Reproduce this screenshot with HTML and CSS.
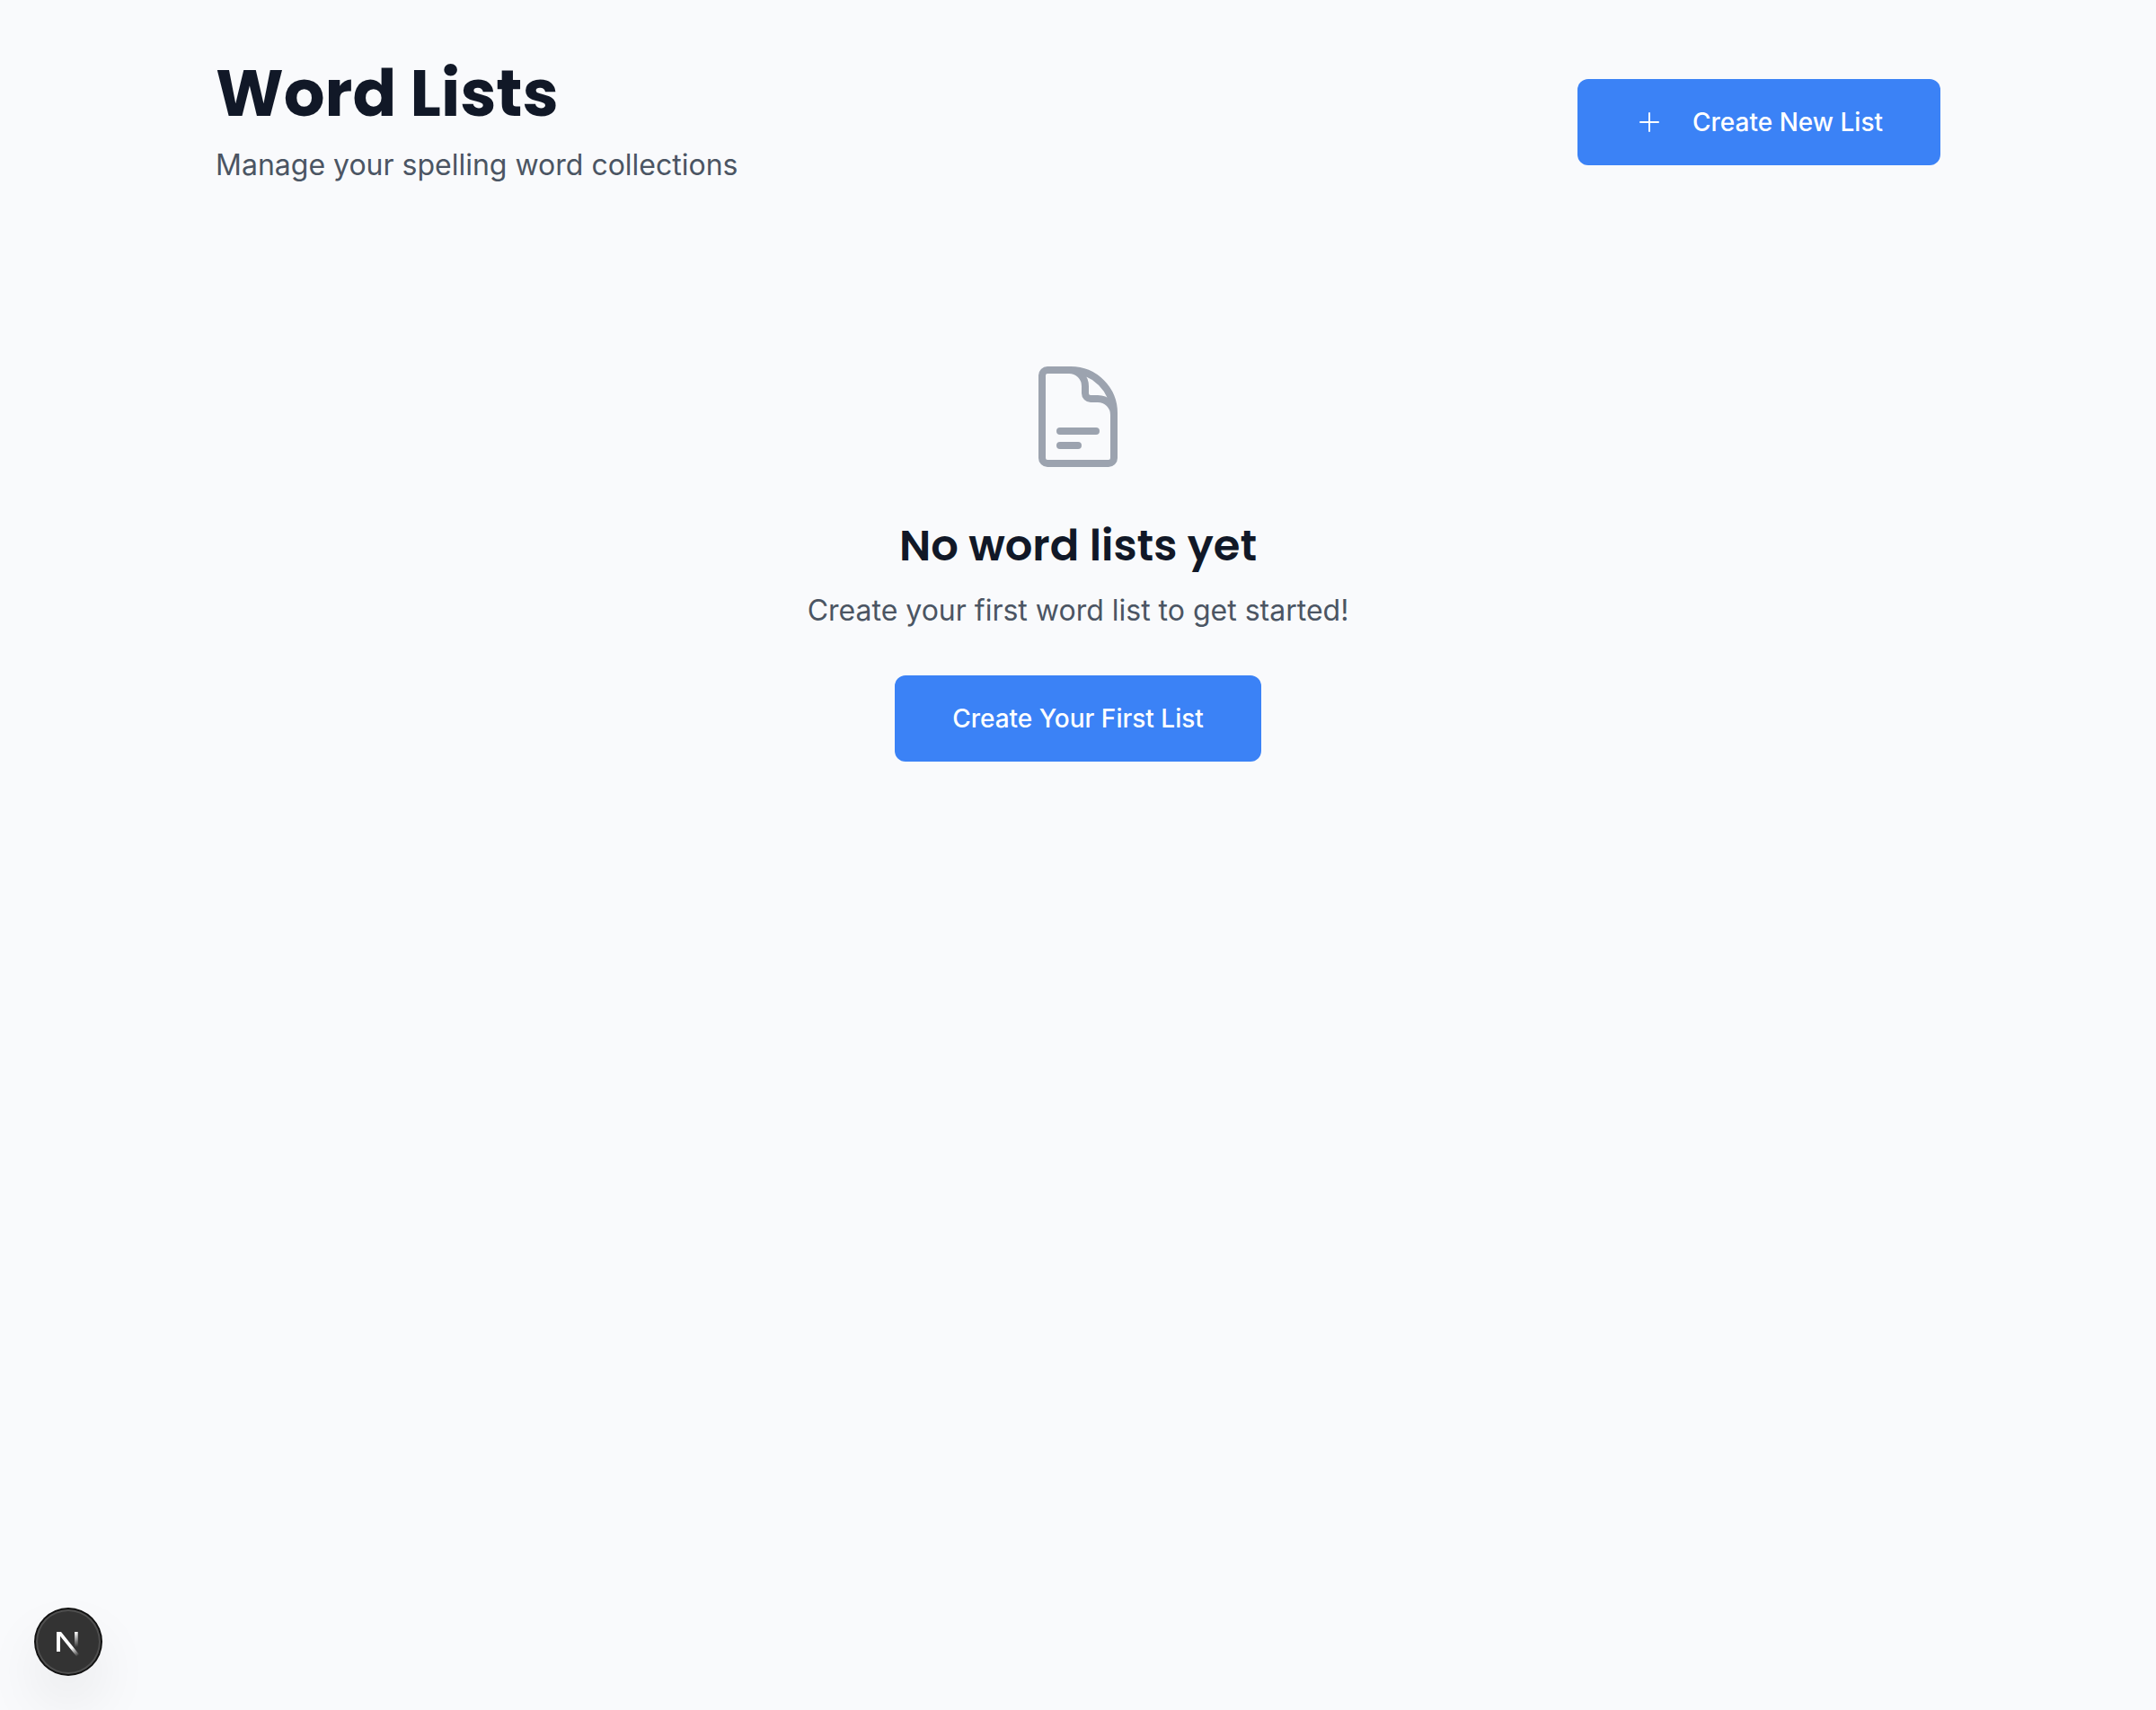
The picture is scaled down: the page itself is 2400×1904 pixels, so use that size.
FILE: index.html
```html
<!DOCTYPE html>
<html lang="en">
<head>
<meta charset="utf-8">
<meta name="viewport" content="width=device-width, initial-scale=1">
<title>Word Lists</title>
<link rel="stylesheet" href="styles.css">
</head>
<body>
<main class="page">
  <header class="page-header">
    <div class="intro">
      <h1 class="title">Word Lists</h1>
      <p class="lead">Manage your spelling word collections</p>
    </div>
    <button class="button" type="button">
      <svg class="button-icon" viewBox="0 0 24 24" aria-hidden="true"><path d="M12 4.5v15m7.5-7.5h-15"/></svg>
      Create New List
    </button>
  </header>
  <section class="empty">
    <svg class="empty-icon" viewBox="0 0 24 24" aria-hidden="true"><path d="M19.5 14.25v-2.625a3.375 3.375 0 0 0-3.375-3.375h-1.5A1.125 1.125 0 0 1 13.5 7.125v-1.5a3.375 3.375 0 0 0-3.375-3.375H8.25m0 12.75h7.5m-7.5 3H12M10.5 2.25H5.625c-.621 0-1.125.504-1.125 1.125v17.25c0 .621.504 1.125 1.125 1.125h12.75c.621 0 1.125-.504 1.125-1.125V11.25a9 9 0 0 0-9-9Z"/></svg>
    <h2 class="empty-title">No word lists yet</h2>
    <p class="lead empty-text">Create your first word list to get started!</p>
    <button class="button" type="button">Create Your First List</button>
  </section>
</main>
<button class="dev-badge" type="button" aria-label="Open developer tools">
  <svg class="dev-logo" viewBox="0 0 72 72" aria-hidden="true">
    <defs>
      <linearGradient id="diagonal" gradientUnits="userSpaceOnUse" x1="39.5" y1="43" x2="46.5" y2="52">
        <stop stop-color="#fff"/><stop offset="1" stop-color="#fff" stop-opacity="0"/>
      </linearGradient>
      <linearGradient id="stem" gradientUnits="userSpaceOnUse" x1="44" y1="25" x2="44" y2="42">
        <stop stop-color="#fff"/><stop offset="1" stop-color="#fff" stop-opacity="0"/>
      </linearGradient>
    </defs>
    <path d="M23 25h5l20 25-2.7 2.4L27 29.8V47h-4z" fill="url(#diagonal)"/>
    <path d="M43 25h3.7v17H43z" fill="url(#stem)"/>
  </svg>
</button>
</body>
</html>
```
FILE: styles.css
```css
* {
  box-sizing: border-box;
}

body {
  margin: 0;
  min-height: 100vh;
  background: #f9fafc;
  color: #111827;
  font-family: Inter, "Liberation Sans", sans-serif;
}

h1, h2, p {
  margin: 0;
}

.page {
  width: 80%;
  margin: 0 auto;
  padding: 64px 0;
}

.page-header {
  display: flex;
  align-items: center;
  justify-content: space-between;
  gap: 32px;
  margin-bottom: 64px;
}

.title {
  margin-bottom: 16px;
  font-family: Poppins, Inter, sans-serif;
  font-size: 72px;
  line-height: 80px;
  font-weight: 700;
}

.lead {
  color: #4b5563;
  font-size: 32px;
  line-height: 48px;
}

.button {
  display: inline-flex;
  align-items: center;
  gap: 32px;
  height: 96px;
  padding: 0 64px;
  border: 0;
  border-radius: 12px;
  background: #3b82f6;
  color: #fff;
  font-family: inherit;
  font-size: 28px;
  line-height: 40px;
  font-weight: 500;
  white-space: nowrap;
  cursor: pointer;
}

.button-icon,
.empty-icon {
  fill: none;
  stroke: currentColor;
  stroke-width: 1.5;
  stroke-linecap: round;
  stroke-linejoin: round;
}

.button-icon {
  width: 32px;
  height: 32px;
}

.empty {
  display: flex;
  flex-direction: column;
  align-items: center;
  padding: 128px 0;
  text-align: center;
}

.empty-icon {
  width: 128px;
  height: 128px;
  margin-bottom: 48px;
  color: #9ca3af;
}

.empty-title {
  margin-bottom: 16px;
  font-family: Poppins, Inter, sans-serif;
  font-size: 48px;
  line-height: 64px;
  font-weight: 600;
}

.empty-text {
  margin-bottom: 48px;
}

.dev-badge {
  position: fixed;
  left: 40px;
  bottom: 40px;
  width: 72px;
  height: 72px;
  padding: 0;
  border: 0;
  border-radius: 50%;
  background: #333;
  box-shadow: 0 0 0 2px #111, inset 0 0 0 2px rgba(255, 255, 255, 0.14), 0 32px 64px rgba(0, 0, 0, 0.08);
  cursor: pointer;
}

.dev-logo {
  display: block;
  width: 72px;
  height: 72px;
}
```
